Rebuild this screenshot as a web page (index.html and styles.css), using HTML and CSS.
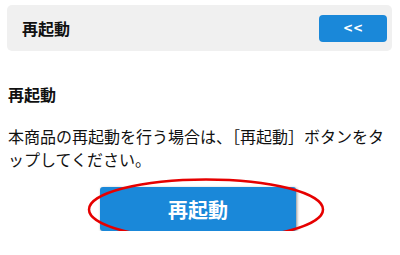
FILE: index.html
```html
<!DOCTYPE html>
<html lang="ja">
<head>
<meta charset="utf-8">
<link rel="stylesheet" href="styles.css">
</head>
<body>
<div class="page">
  <div class="header">
    <div class="header-title">再起動</div>
    <div class="back-btn">&lt;&lt;</div>
  </div>
  <h2 class="heading">再起動</h2>
  <p class="desc">本商品の再起動を行う場合は、［再起動］ボタンをタップしてください。</p>
  <div class="action">
    <div class="action-inner">
      <div class="restart-btn">再起動</div>
      <svg class="circle" width="240" height="64" viewBox="0 0 240 64">
        <ellipse cx="119" cy="31.5" rx="117" ry="30" fill="none" stroke="#e60000" stroke-width="2.5"/>
      </svg>
    </div>
  </div>
</div>
</body>
</html>
```

FILE: styles.css
```css
html, body {
  margin: 0;
  padding: 0;
  background: #ffffff;
}
body {
  font-family: "Noto Sans CJK JP", "Noto Sans", sans-serif;
  color: #111;
}
.page {
  padding: 5px 8px 0 8px;
}
.header {
  height: 46px;
  margin-left: -1px;
  background: #f0f0f0;
  border-radius: 5px;
  display: flex;
  align-items: center;
  justify-content: space-between;
  padding: 0 5px 0 15px;
  box-sizing: border-box;
}
.header-title {
  font-size: 16px;
  font-weight: bold;
  line-height: 20px;
}
.back-btn {
  width: 68px;
  height: 27px;
  background: #1a88d9;
  border-radius: 4px;
  color: #fff;
  font-family: "DejaVu Sans", sans-serif;
  font-weight: bold;
  font-size: 12px;
  display: flex;
  align-items: center;
  justify-content: center;
}
.heading {
  margin: 32px 0 0 0;
  font-size: 16px;
  font-weight: bold;
  line-height: 23px;
}
.desc {
  margin: 19px 0 0 0;
  font-size: 16px;
  line-height: 23px;
}
.action {
  display: flex;
  justify-content: center;
  margin-top: 16px;
}
.action-inner {
  position: relative;
  margin-left: -4px;
}
.restart-btn {
  width: 196px;
  height: 44px;
  background: #1a88d9;
  border-radius: 3px;
  box-shadow: 1px 1px 3px rgba(0, 0, 0, 0.45);
  color: #fff;
  font-size: 20px;
  font-weight: bold;
  display: flex;
  align-items: center;
  justify-content: center;
}
.circle {
  position: absolute;
  left: -13px;
  top: -9px;
  pointer-events: none;
}
```
